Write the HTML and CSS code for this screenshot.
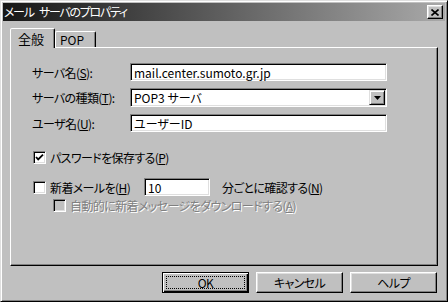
FILE: index.html
```html
<!DOCTYPE html>
<html>
  <head>
    <meta charset="utf-8">
    <title>メール サーバのプロパティ</title>
    <link rel="stylesheet" href="styles.css">
  </head>
  <body>
    <div class="window">
      <div class="titlebar">
        <span class="title">メール サーバのプロパティ</span>
        <span class="close-btn">
          <svg width="8" height="7" viewBox="0 0 8 7">
            <path d="M0.5 0.5 L7.5 6.5 M7.5 0.5 L0.5 6.5" stroke="#000" stroke-width="1.6" />
          </svg>
        </span>
      </div>
      <div class="content">
        <div class="tabs">
          <div class="tab active">全般</div>
          <div class="tab">POP</div>
        </div>
        <div class="panel">
          <div class="form-grid">
            <span class="label">サーバ名(<u>S</u>):</span>
            <div class="textbox">mail.center.sumoto.gr.jp</div>
            <span class="label">サーバの種類(<u>T</u>):</span>
            <div class="textbox combo">
              <span class="combo-value">POP3 サーバ</span>
              <span class="drop-btn">
                <svg width="7" height="4" viewBox="0 0 7 4"><path d="M0 0h7L3.5 4z" fill="#000" /></svg>
              </span>
            </div>
            <span class="label">ユーザ名(<u>U</u>):</span>
            <div class="textbox">ユーザーID</div>
          </div>
          <div class="check-row first">
            <span class="checkbox">
              <svg width="11" height="11" viewBox="0 0 11 11"><path d="M2 5 L4.2 7.4 L9 2.6" stroke="#000" stroke-width="1.8" fill="none" /></svg>
            </span>
            <span>パスワードを保存する(<u>P</u>)</span>
          </div>
          <div class="check-row second">
            <span class="checkbox"></span>
            <span class="check-label">新着メールを(<u>H</u>)</span>
            <div class="textbox small">10</div>
            <span>分ごとに確認する(<u>N</u>)</span>
          </div>
          <div class="check-row sub disabled">
            <span class="checkbox"></span>
            <span>自動的に新着メッセージをダウンロードする(<u>A</u>)</span>
          </div>
        </div>
        <div class="buttons">
          <button class="btn default" type="button"><span class="focus">OK</span></button>
          <button class="btn" type="button">キャンセル</button>
          <button class="btn" type="button">ヘルプ</button>
        </div>
      </div>
    </div>
  </body>
</html>
```

FILE: styles.css
```css
body {
  margin: 0;
  font: 12px "Noto Sans CJK JP", sans-serif;
  font-feature-settings: "palt";
  letter-spacing: -0.6px;
  background: #c0c0c0;
  color: #000;
}
.window {
  width: 448px;
  height: 302px;
  box-sizing: border-box;
  background: #c0c0c0;
  border: 1px solid;
  border-color: #dfdfdf #000 #000 #dfdfdf;
  box-shadow: inset 1px 1px #fff, inset -1px -1px #808080;
  padding: 2px;
}
.titlebar {
  height: 18px;
  display: flex;
  align-items: center;
  justify-content: space-between;
  background: linear-gradient(to right, #161616, #a9a9a9);
  padding: 0 2px 0 1px;
}
.title {
  color: #fff;
  line-height: 18px;
  letter-spacing: -1.3px;
  word-spacing: 4px;
}
.close-btn {
  width: 16px;
  height: 14px;
  box-sizing: border-box;
  background: #c0c0c0;
  border: 1px solid;
  border-color: #fff #000 #000 #fff;
  box-shadow: inset -1px -1px #808080, inset 1px 1px #dfdfdf;
  display: flex;
  align-items: center;
  justify-content: center;
}
.content {
  padding: 7px 7px 0 7px;
}
.tabs {
  display: flex;
  align-items: flex-end;
  height: 19px;
}
.tab {
  height: 16px;
  width: 41px;
  box-sizing: border-box;
  padding-left: 4px;
  border: 1px solid;
  border-bottom: none;
  border-color: #fff #000 transparent #fff;
  box-shadow: inset -1px 0 #808080;
  border-radius: 2px 2px 0 0;
  display: flex;
  align-items: center;
  line-height: 12px;
  letter-spacing: normal;
}
.tab.active {
  height: 20px;
  width: 45px;
  padding-left: 7px;
  margin-bottom: -1px;
  position: relative;
  z-index: 1;
  background: #c0c0c0;
  font-size: 13px;
}
.panel {
  height: 219px;
  box-sizing: border-box;
  border: 1px solid;
  border-color: #fff #000 #000 #fff;
  box-shadow: inset -1px -1px #808080;
  padding: 15px 20px 0 21px;
}
.form-grid {
  display: grid;
  grid-template-columns: 98px 257px;
  row-gap: 7px;
  align-items: center;
}
.textbox {
  height: 18px;
  box-sizing: border-box;
  border: 1px solid;
  border-color: #808080 #fff #fff #808080;
  box-shadow: inset 1px 1px #000, inset -1px -1px #dfdfdf;
  background: #fff;
  padding: 0 3px;
  display: flex;
  align-items: center;
  white-space: nowrap;
  letter-spacing: normal;
}
.combo {
  height: 19px;
  padding: 1px 1px 1px 3px;
  justify-content: space-between;
}
.drop-btn {
  width: 16px;
  height: 15px;
  box-sizing: border-box;
  background: #c0c0c0;
  border: 1px solid;
  border-color: #dfdfdf #000 #000 #dfdfdf;
  box-shadow: inset 1px 1px #fff, inset -1px -1px #808080;
  display: flex;
  align-items: center;
  justify-content: center;
}
.check-row {
  display: flex;
  align-items: center;
  margin-left: 1px;
  white-space: nowrap;
}
.check-row.first {
  height: 13px;
  margin-top: 19px;
}
.check-row.second {
  height: 18px;
  margin-top: 14px;
}
.check-row.sub {
  height: 13px;
  margin-top: 3px;
  margin-left: 21px;
}
.checkbox {
  width: 13px;
  height: 13px;
  flex: none;
  box-sizing: border-box;
  border: 1px solid;
  border-color: #808080 #fff #fff #808080;
  box-shadow: inset 1px 1px #000, inset -1px -1px #dfdfdf;
  background: #fff;
  margin-right: 4px;
  display: flex;
  align-items: center;
  justify-content: center;
}
.check-label {
  width: 94px;
}
.textbox.small {
  width: 66px;
  margin-right: 12px;
}
.disabled {
  color: #808080;
  text-shadow: 1px 1px #fff;
}
.disabled .checkbox {
  background: #c0c0c0;
}
.buttons {
  display: flex;
  justify-content: flex-end;
  gap: 7px;
  margin-top: 6px;
  padding-right: 1px;
}
.btn {
  width: 87px;
  height: 21px;
  padding: 0;
  font: inherit;
  letter-spacing: inherit;
  color: #000;
  background: #c0c0c0;
  border: 1px solid;
  border-color: #fff #000 #000 #fff;
  box-shadow: inset -1px -1px #808080, inset 1px 1px #dfdfdf;
}
.btn.default {
  border-color: #000;
  box-shadow: inset 1px 1px #fff, inset -1px -1px #000, inset -2px -2px #808080;
  padding: 3px;
}
.focus {
  display: flex;
  height: 100%;
  box-sizing: border-box;
  align-items: center;
  justify-content: center;
  border: 1px dotted #000;
}
```
